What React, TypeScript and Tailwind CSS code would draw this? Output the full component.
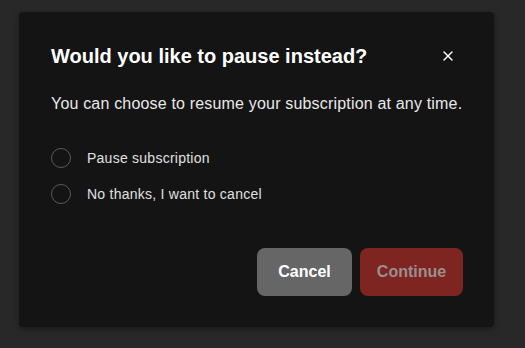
import { X } from 'lucide-react'

const options = ['Pause subscription', 'No thanks, I want to cancel']

export default function App() {
  return (
    <div
      className="w-[525px] h-[348px] bg-[#282828] pt-[12px] pl-[19px]"
      style={{ fontFamily: '"Liberation Sans", Arial, sans-serif' }}
    >
      <div className="w-[475px] h-[315px] bg-[#141414] rounded-[4px] shadow-[0_2px_6px_rgba(0,0,0,0.4)] pl-8 pr-[31px] pt-[30px]">
        {/* Header */}
        <div className="flex items-center justify-between">
          <h2 className="text-[20px] leading-7 font-bold text-white">
            Would you like to pause instead?
          </h2>
          <button className="mr-[7px] text-white">
            <X className="w-4 h-4" strokeWidth={2} />
          </button>
        </div>

        <p className="mt-[22px] text-[16px] leading-6 text-[#e8e8e8] tracking-[0.18px] whitespace-nowrap">
          You can choose to resume your subscription at any time.
        </p>

        {/* Options */}
        <div className="mt-8 flex flex-col gap-4">
          {options.map((label) => (
            <label key={label} className="flex items-center gap-4 cursor-pointer">
              <span className="w-5 h-5 rounded-full border border-[#5a5a5a] shrink-0" />
              <span className="text-[14px] leading-5 text-[#e0e0e0] tracking-[0.25px]">{label}</span>
            </label>
          ))}
        </div>

        {/* Actions */}
        <div className="mt-[44px] flex justify-end gap-2">
          <button className="w-[95px] h-12 rounded-lg bg-[#666666] text-white text-[16px] font-bold">
            Cancel
          </button>
          <button className="w-[103px] h-12 rounded-lg bg-[#7e2421] text-[#9a8f8f] text-[16px] font-bold">
            Continue
          </button>
        </div>
      </div>
    </div>
  )
}
